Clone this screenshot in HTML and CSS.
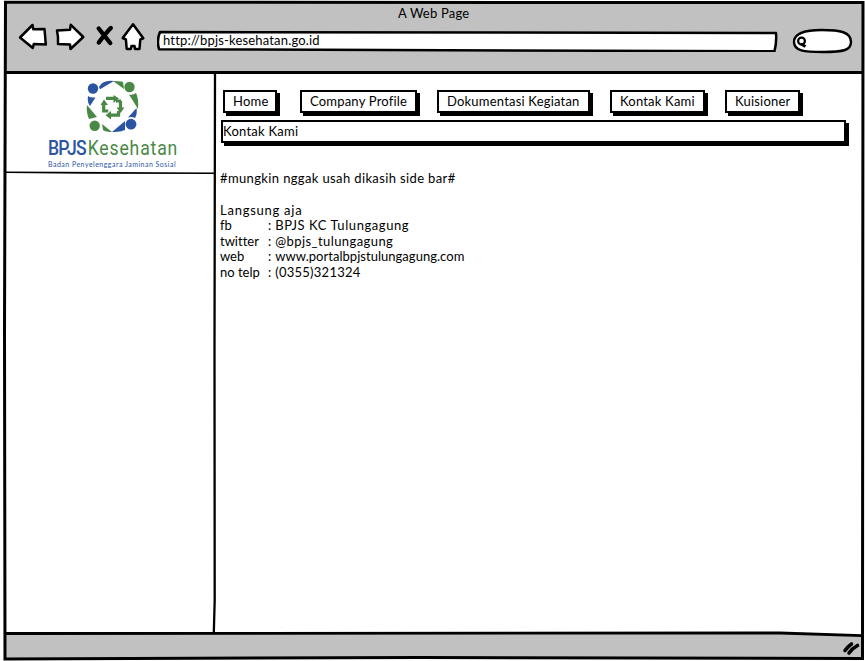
FILE: index.html
```html
<!DOCTYPE html>
<html lang="id">
<head>
<meta charset="utf-8">
<title>A Web Page</title>
<link rel="stylesheet" href="styles.css">
</head>
<body>
<div class="window">
  <header class="chrome">
    <div class="title"><span class="t-title">A Web Page</span></div>
    <div class="toolbar">
      <svg class="nav-icons" width="132" height="36" viewBox="16 20 132 36">
        <g fill="#fff" stroke="#000" stroke-width="2.5" stroke-linejoin="round">
          <path d="M20 37.500 32.500 25l.8 4.300L44.500 29l1.300 15.500-12-.5-1 4z"/>
          <path d="M57 30.500l13-.7.8-5L83.300 37 70.500 49l-.5-4.500L58 44q.5-7-1-13.500z"/>
          <path d="M133 24.300l10.300 14-3 1.200-.8 9.500H135l-.5-3h-3l-.8 3h-4l-.8-9.500-3.200-1.500z"/>
        </g>
        <path d="M98.700 28.500q4 5 11.500 14.500M110.800 28q-5 5-12 14.500" fill="none" stroke="#000" stroke-width="4.400" stroke-linecap="round"/>
      </svg>
      <div class="address">
        <svg class="fill" viewBox="157 30 622 22"><path d="M160 32L776 33Q776.800 42 774.500 51.300L159 49.300Q156.500 40 160 32z" fill="#fff" stroke="#000" stroke-width="2.500" stroke-linejoin="round"/></svg>
        <span class="t-url">http://bpjs-kesehatan.go.id</span>
      </div>
      <svg class="search" width="62" height="26" viewBox="791 28 62 26">
        <path d="M794 42c0-7 7-12 28-12 18 0 29 2 29 12 0 8-7 10-28 10-19 0-29-1-29-10z" fill="#fff" stroke="#000" stroke-width="2.400"/>
        <circle cx="801.500" cy="41" r="3.400" fill="none" stroke="#000" stroke-width="2.200"/>
        <path d="M801 44l4.500 2.500" stroke="#000" stroke-width="2.800"/>
      </svg>
    </div>
  </header>
  <div class="body">
    <aside class="sidebar">
      <svg class="logo" width="56" height="54" viewBox="85 79 56 54">
        <g fill="#2b55a2"><circle cx="93" cy="88.500" r="5.200"/><circle cx="131" cy="124.200" r="5.400"/>
          <path d="M99 87Q103 79.500 114 81l-14 8.300zM88 96q2 2 7.500 1.500L90 106q-3-4-2-10zM136.500 108q1 6-1.500 10-3-1.500-7-.5zM125 121v9q-5 2.500-13 2z"/></g>
        <g fill="#4a8945"><circle cx="129.500" cy="87" r="5.200"/><circle cx="94.700" cy="125.700" r="5.200"/>
          <path d="M113 81q7 0 10 1l1 7zM129 94.500q4 1 7-1.500 3 6 2 16zM87 105l10 12-8 2q-3-7-2-14zM102 124l10 8q-6 0-9-2z"/></g>
        <path d="M106 98.300h10M103.700 103v8h4.500M120.500 101v8M116 101h5M109 115.200h9.500V111" fill="none" stroke="#4a8945" stroke-width="3.200"/>
        <path d="M113.500 95l5.500 3.500-5.500 4.500zM100.500 105l3.500-5.500 4 5.500zM116.500 107.500h8l-4 5.500zM111 111v8.500l-5.500-4.300z" fill="#4a8945"/>
      </svg>
      <div class="brand"><span class="bpjs">BPJS</span><span class="kes">Kesehatan</span></div>
      <div class="tagline">Badan Penyelenggara Jaminan Sosial</div>
      <svg class="rule" viewBox="0 0 209 4"><path d="M0 .5L209 1.500V3L80 2.700 0 2z"/></svg>
    </aside>
    <main class="content">
      <nav class="menu">
        <a class="box home">Home</a>
        <a class="box profile">Company Profile</a>
        <a class="box docs">Dokumentasi Kegiatan</a>
        <a class="box contact">Kontak Kami</a>
        <a class="box survey">Kuisioner</a>
      </nav>
      <div class="box heading">Kontak Kami</div>
      <p class="note">#mungkin nggak usah dikasih side bar#</p>
      <p class="intro">Langsung aja</p>
      <dl class="list">
        <dt>fb</dt><dd>: <span class="v-fb">BPJS KC Tulungagung</span></dd>
        <dt>twitter</dt><dd>: <span class="v-tw">@bpjs_tulungagung</span></dd>
        <dt>web</dt><dd>: <span class="v-web">www.portalbpjstulungagung.com</span></dd>
        <dt>no telp</dt><dd>: <span class="v-tel">(0355)321324</span></dd>
      </dl>
    </main>
  </div>
  <footer class="status"></footer>
  <svg class="frame" viewBox="0 0 865 661">
    <path d="M780 633L862 636V633z" fill="#fff"/>
    <g fill="none" stroke="#000" stroke-width="3">
      <path d="M5.500 2.300L863 2.500 862.500 658.500 420 657.500 5 659 4.500 330z"/>
      <path d="M5 72.500H862"/>
      <path d="M5 633.500L780 633 862 635.700" stroke-width="2.800"/>
      <path d="M215 73L214.500 350 214.700 600 213.800 633" stroke-width="2.300"/>
    </g>
    <path d="M845 650.500q3-4 6.500-6.500M849 653q3-4.500 8.500-7.500" fill="none" stroke="#000" stroke-width="3.600" stroke-linecap="round"/>
  </svg>
</div>
</body>
</html>
```
FILE: styles.css
```css
* { box-sizing: border-box; }
body { margin: 0; background: #fff; color: #000; font: 13px/16px Lato, "Liberation Sans", sans-serif; font-variant-ligatures: none; }
.window { position: relative; width: 865px; height: 661px; padding: 2px 2px 2px 5px; display: flex; flex-direction: column; overflow: hidden; }
.frame { position: absolute; left: 0; top: 0; width: 865px; height: 661px; pointer-events: none; }
.chrome { height: 70px; background: #c1c1c1; }
.title { height: 18px; padding: 3px 0 0 393px; letter-spacing: .2px; }
.toolbar { display: flex; align-items: flex-start; padding-left: 11px; }
.nav-icons { flex: none; margin-right: 9px; }
.address { position: relative; width: 622px; height: 22px; margin: 10px 12px 0 0; padding: 2px 0 0 6px; letter-spacing: .17px; }
.address span { position: relative; }
.fill { position: absolute; left: 0; top: 0; width: 622px; height: 22px; }
.search { flex: none; margin-top: 8px; }
.body { flex: 1; display: flex; }
.sidebar { width: 209px; display: flex; flex-direction: column; align-items: flex-start; padding-top: 7px; }
.logo { margin-left: 80px; }
.brand { display: flex; gap: 2px; margin: 4px 0 0 43px; font: 20px/22px Roboto, sans-serif; height: 23px; transform-origin: 0 0; transform: scaleX(.88); white-space: nowrap; }
.bpjs { color: #2b55a2; font-weight: 500; letter-spacing: -.9px; }
.kes { color: #4a8945; font-weight: 400; letter-spacing: .95px; }
.tagline { margin-left: 43px; height: 8px; color: #2b55a2; font-size: 7px; line-height: 8px; letter-spacing: .48px; white-space: nowrap; }
.rule { width: 209px; height: 4px; margin-top: 3px; }
.content { flex: 1; padding: 18px 0 0 6px; letter-spacing: .32px; }
.box { display: block; border: 2px solid #000; background: #fff; box-shadow: 3px 3px 0 #000; height: 23px; line-height: 18px; white-space: nowrap; }
.menu { display: flex; padding-left: 3px; }
.menu .box { padding-left: 8px; letter-spacing: .2px; }
.home { width: 54px; margin-right: 23px; }
.profile { width: 117px; margin-right: 20px; }
.docs { width: 153px; margin-right: 20px; }
.contact { width: 95px; margin-right: 20px; }
.survey { width: 75px; }
.heading { width: 625px; margin: 7px 0 0 1px; letter-spacing: .26px; }
p { margin: 0; }
.note { margin-top: 27px; letter-spacing: .37px; }
.intro { margin-top: 16px; letter-spacing: .75px; }
.list { display: grid; grid-template-columns: 48px 1fr; grid-auto-rows: 15.5px; margin: 0; line-height: 15px; }
dt { letter-spacing: 0; }
dd { margin: 0; }
.v-fb { letter-spacing: .57px; }
.v-tw { letter-spacing: .42px; }
.v-web { letter-spacing: .03px; }
.v-tel { letter-spacing: .25px; }
.status { height: 25px; background: #c1c1c1; }
```
